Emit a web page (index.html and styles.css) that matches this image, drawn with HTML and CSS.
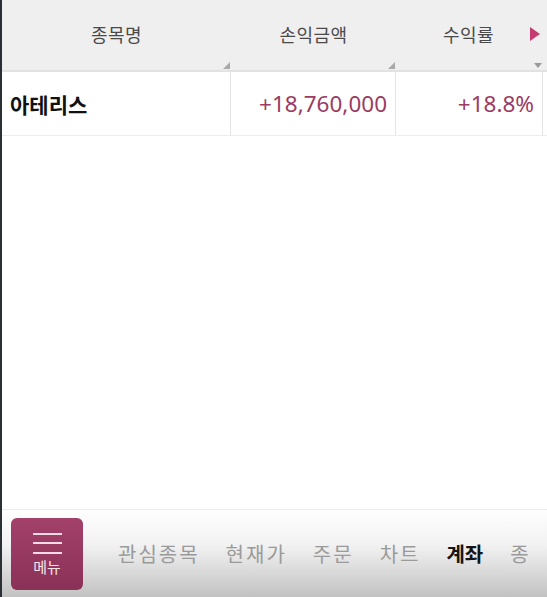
FILE: index.html
```html
<!DOCTYPE html>
<html lang="ko">
<head>
    <meta charset="UTF-8">
    <meta name="viewport" content="width=device-width, initial-scale=1.0">
    <title>계좌 - 손익</title>
    <link rel="stylesheet" href="styles.css">
</head>
<body>
    <div class="app">
        <div class="grid">
            <div class="head-row">
                <div class="head-cell">종목명<span class="corner"></span></div>
                <div class="head-cell">손익금액<span class="corner"></span></div>
                <div class="head-cell last">수익률<span class="next"></span><span class="drop"></span></div>
                <div class="head-cell tail"></div>
            </div>
            <div class="data-row">
                <div class="cell name">아테리스</div>
                <div class="cell num">+18,760,000</div>
                <div class="cell num">+18.8%</div>
                <div class="cell tail"></div>
            </div>
        </div>

        <div class="spacer"></div>

        <nav class="bottom-nav">
            <button type="button" class="menu-btn">
                <span class="bars"><i></i><i></i><i></i></span>
                <span class="menu-label">메뉴</span>
            </button>
            <ul class="tabs">
                <li>관심종목</li>
                <li>현재가</li>
                <li>주문</li>
                <li>차트</li>
                <li class="active">계좌</li>
                <li>종</li>
            </ul>
        </nav>
    </div>
</body>
</html>
```

FILE: styles.css
```css
* { box-sizing: border-box; }
html, body { margin: 0; height: 100%; }
body { font-family: "Noto Sans CJK KR", "Noto Sans", sans-serif; background: #fff; }

.app {
    height: 100%;
    display: flex;
    flex-direction: column;
    border-left: 2px solid #2b3034;
}

.head-row, .data-row {
    display: grid;
    grid-template-columns: 229px 165px 147px 1fr;
}

.head-row {
    height: 72px;
    background: #efefef;
    border-bottom: 2px solid #e2e2e2;
}

.head-cell {
    position: relative;
    display: flex;
    align-items: center;
    justify-content: center;
    padding-bottom: 2px;
    font-size: 18px;
    letter-spacing: 0.5px;
    color: #4a4a4a;
}

.head-cell.last { padding-right: 2px; }

.corner {
    position: absolute;
    right: 1px;
    bottom: 1px;
    width: 0;
    height: 0;
    border-left: 7px solid transparent;
    border-bottom: 7px solid #a9a9a9;
}

.next {
    position: absolute;
    right: 3px;
    top: 27px;
    width: 0;
    height: 0;
    border-top: 7px solid transparent;
    border-bottom: 7px solid transparent;
    border-left: 10px solid #c63c72;
}

.drop {
    position: absolute;
    right: 1px;
    bottom: 2px;
    width: 0;
    height: 0;
    border-left: 4px solid transparent;
    border-right: 4px solid transparent;
    border-top: 5px solid #9a9a9a;
}

.head-cell.tail { background: #efefef; }

.data-row {
    height: 64px;
    border-bottom: 1px solid #ececec;
}

.cell {
    display: flex;
    align-items: center;
    font-size: 21px;
    border-right: 1px solid #e4e4e4;
}

.cell.tail { border-right: none; }

.cell.name {
    padding-left: 8px;
    font-weight: 700;
    color: #111;
}

.cell.num {
    justify-content: flex-end;
    padding-right: 8px;
    font-size: 22.5px;
    color: #9b3b62;
    font-family: "Noto Sans", "Open Sans", sans-serif;
}

.spacer { flex: 1; }

.bottom-nav {
    height: 88px;
    display: flex;
    align-items: center;
    padding-left: 9px;
    border-top: 1px solid #ececec;
    background: linear-gradient(to bottom, #fefefe 0%, #f2f2f2 40%, #c2c2c2 100%);
}

.menu-btn {
    flex: none;
    width: 72px;
    height: 72px;
    border: none;
    border-radius: 6px;
    background: linear-gradient(to bottom, #a3416a, #8a3157);
    display: flex;
    flex-direction: column;
    align-items: center;
    justify-content: center;
    gap: 3px;
    padding: 2px 0 0;
    cursor: pointer;
}

.bars { display: flex; flex-direction: column; gap: 7.5px; }
.bars i { display: block; width: 29px; height: 2px; background: #f6dbe6; }

.menu-label {
    font-size: 15px;
    line-height: 20px;
    color: #f6e3ea;
    font-family: "Noto Sans CJK KR", sans-serif;
}

.tabs {
    list-style: none;
    margin: 0;
    padding: 0 0 0 35px;
    display: flex;
    gap: 26px;
    font-size: 20px;
    color: #9a9a9a;
    white-space: nowrap;
    overflow: hidden;
    letter-spacing: 2px;
}

.tabs .active { color: #151515; font-weight: 700; letter-spacing: 0; margin-right: 1px; }
```
